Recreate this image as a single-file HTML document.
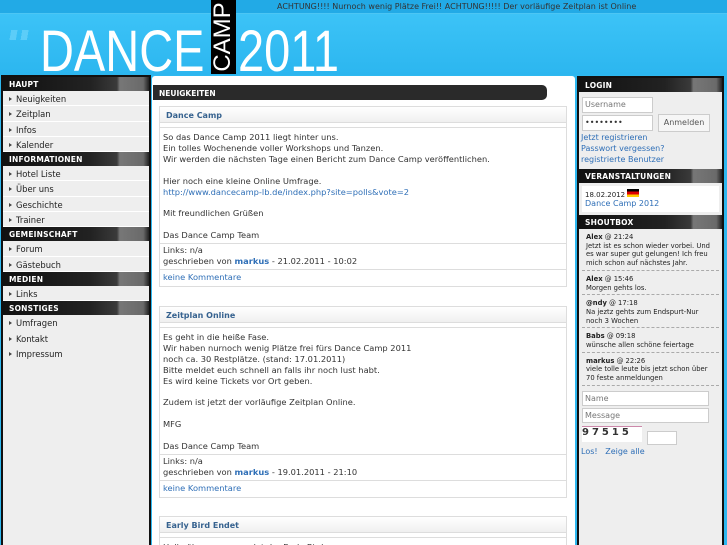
<!DOCTYPE html>
<html><head><meta charset="utf-8"><style>
*{margin:0;padding:0;box-sizing:border-box}
html,body{width:727px;height:545px;overflow:hidden}
body{background:#2eb8f0;font-family:"DejaVu Sans","Liberation Sans",sans-serif;position:relative}
.abs{position:absolute}
#top{left:0;top:0;width:727px;height:14px;background:#22aae6;border-bottom:1px solid #4cc6f4}
#marq{left:277px;top:2px;font-size:8px;color:#333;white-space:nowrap}
#hdr{left:0;top:14px;width:727px;height:61px;background:linear-gradient(#3cc3f7,#2cb6ef)}
.big{font-family:"Liberation Sans",sans-serif;color:#fff;font-size:58px;line-height:58px;transform:scaleX(.81);transform-origin:0 0;white-space:nowrap}
#camp{left:211px;top:0;width:25px;height:74px;background:#000}
#campt{left:210px;top:72px;color:#fff;font-family:"Liberation Sans",sans-serif;font-size:24px;transform:rotate(-90deg);transform-origin:0 0;width:70px;text-align:center;line-height:26px}
.col{background:#eeeeee;border:2px solid #111}
.bar{height:14px;background:linear-gradient(90deg,#111,#222 60%,#3a3a3a 78%,#777 80%,#6a6a6a 96%,#222);color:#fff;font-size:7.5px;font-weight:bold;padding:3px 0 0 6px;letter-spacing:.2px}
.it{height:15.3px;font-size:8.4px;color:#222;padding:3px 0 0 6px;border-bottom:1px solid #fff}
.it:before{content:"";display:inline-block;border-left:3px solid #444;border-top:2px solid transparent;border-bottom:2px solid transparent;margin-right:4px;vertical-align:1px}
#main{left:152px;top:76px;width:423px;height:480px;background:#fff;border-radius:3px 3px 0 0}
#nbar{left:153px;top:85px;width:394px;height:15px;background:#2a2a2a;border-radius:0 5px 5px 0;color:#fff;font-size:7.5px;font-weight:bold;padding:4px 0 0 6px}
.box{position:absolute;left:159px;width:408px;border:1px solid #ddd;background:#fff}
.bt{height:16px;background:linear-gradient(#fff,#f0f0f0);font-size:8px;font-weight:bold;color:#36628f;padding:4px 0 0 6px;border-bottom:1px solid #ddd;margin-bottom:4px}
.bb{border-top:1px solid #ddd;font-size:8.3px;line-height:10.9px;color:#333;padding:4px 3px 2px}
.bb a,.lk{color:#2f6fb7;text-decoration:none}
.rt{left:577px;top:76px;width:147px;height:480px}
.inp{position:absolute;border:1px solid #ccc;background:#fff;font-size:8px;color:#777;padding:2px 2px}
.sh{font-size:6.8px;line-height:8.7px;color:#222;padding:4px 4px 2px;border-bottom:1px dashed #aaa;margin:0 3px}
</style></head><body>
<div id="top" class="abs"></div>
<div id="marq" class="abs">ACHTUNG!!!! Nurnoch wenig Plätze Frei!! ACHTUNG!!!!! Der vorläufige Zeitplan ist Online</div>
<div id="hdr" class="abs"></div>
<div class="abs" style="left:8px;top:30px;width:30px;height:10px;background:linear-gradient(100deg,transparent 10%,#5ccdf8 10% 30%,transparent 30% 45%,#5ccdf8 45% 65%,transparent 65%)"></div>
<div class="abs big" style="left:40px;top:23px">DANCE</div>
<div class="abs big" style="left:238px;top:23px">2011</div>
<div id="camp" class="abs"></div>
<div id="campt" class="abs">CAMP</div>

<div class="abs col" style="left:1px;top:75px;width:150px;height:475px">
<div class="bar">HAUPT</div>
<div class="it">Neuigkeiten</div><div class="it">Zeitplan</div><div class="it">Infos</div><div class="it">Kalender</div>
<div class="bar">INFORMATIONEN</div>
<div class="it">Hotel Liste</div><div class="it">Über uns</div><div class="it">Geschichte</div><div class="it">Trainer</div>
<div class="bar">GEMEINSCHAFT</div>
<div class="it">Forum</div><div class="it">Gästebuch</div>
<div class="bar">MEDIEN</div>
<div class="it">Links</div>
<div class="bar">SONSTIGES</div>
<div class="it" style="border:0">Umfragen</div><div class="it" style="border:0">Kontakt</div><div class="it" style="border:0">Impressum</div>
</div>

<div id="main" class="abs"></div>
<div id="nbar" class="abs">NEUIGKEITEN</div>

<div class="box" style="top:106px">
<div class="bt">Dance Camp</div>
<div class="bb">So das Dance Camp 2011 liegt hinter uns.<br>Ein tolles Wochenende voller Workshops und Tanzen.<br>Wir werden die nächsten Tage einen Bericht zum Dance Camp veröffentlichen.<br><br>Hier noch eine kleine Online Umfrage.<br><a>http://www.dancecamp-lb.de/index.php?site=polls&amp;vote=2</a><br><br>Mit freundlichen Grüßen<br><br>Das Dance Camp Team</div>
<div class="bb" style="padding-top:1px">Links: n/a<br>geschrieben von <b class="lk">markus</b> - 21.02.2011 - 10:02</div>
<div class="bb" style="padding:2px 3px 3px"><a>keine Kommentare</a></div>
</div>

<div class="box" style="top:306px">
<div class="bt">Zeitplan Online</div>
<div class="bb">Es geht in die heiße Fase.<br>Wir haben nurnoch wenig Plätze frei fürs Dance Camp 2011<br>noch ca. 30 Restplätze. (stand: 17.01.2011)<br>Bitte meldet euch schnell an falls ihr noch lust habt.<br>Es wird keine Tickets vor Ort geben.<br><br>Zudem ist jetzt der vorläufige Zeitplan Online.<br><br>MFG<br><br>Das Dance Camp Team</div>
<div class="bb" style="padding-top:1px">Links: n/a<br>geschrieben von <b class="lk">markus</b> - 19.01.2011 - 21:10</div>
<div class="bb" style="padding:2px 3px 3px"><a>keine Kommentare</a></div>
</div>

<div class="box" style="top:516px;height:40px">
<div class="bt">Early Bird Endet</div>
<div class="bb">Hallo übermorgen endet der Early Bird</div>
</div>

<div class="abs col rt">
<div class="bar">LOGIN</div>
<div style="position:relative;height:77px">
<div class="inp" style="left:3px;top:5px;width:71px;height:16px">Username</div>
<div class="inp" style="left:3px;top:23px;width:71px;height:16px;color:#333">••••••••</div>
<div class="inp" style="left:79px;top:22px;width:52px;height:18px;background:#f6f6f6;color:#555;padding-top:3px;text-align:center">Anmelden</div>
<div class="abs lk" style="left:2px;top:40px;font-size:8px;line-height:11px">Jetzt registrieren<br>Passwort vergessen?<br>registrierte Benutzer</div>
</div>
<div class="bar">VERANSTALTUNGEN</div>
<div style="background:#fff;margin:3px 3px;height:26px;font-size:7px;padding:3px 3px;color:#222">18.02.2012 <span style="display:inline-block;width:12px;height:8px;background:linear-gradient(#000 33%,#d00 33% 66%,#fc0 66%);vertical-align:0"></span><br><span class="lk" style="font-size:8px">Dance Camp 2012</span></div>
<div class="bar">SHOUTBOX</div>
<div class="sh"><b>Alex</b> @ 21:24<br>Jetzt ist es schon wieder vorbei. Und es war super gut gelungen! Ich freu mich schon auf nächstes Jahr.</div>
<div class="sh"><b>Alex</b> @ 15:46<br>Morgen gehts los.</div>
<div class="sh"><b>@ndy</b> @ 17:18<br>Na jeztz gehts zum Endspurt-Nur noch 3 Wochen</div>
<div class="sh"><b>Babs</b> @ 09:18<br>wünsche allen schöne feiertage</div>
<div class="sh"><b>markus</b> @ 22:26<br>viele tolle leute bis jetzt schon über 70 feste anmeldungen</div>
<div style="position:relative;height:80px">
<div class="inp" style="left:3px;top:5px;width:127px;height:15px">Name</div>
<div class="inp" style="left:3px;top:22px;width:127px;height:15px">Message</div>
<div class="abs" style="left:3px;top:40px;width:60px;height:16px;background:#fff;font-size:10px;font-weight:bold;color:#333;letter-spacing:3px;border-top:1px solid #c8a;">97515</div>
<div class="inp" style="left:68px;top:45px;width:30px;height:14px"></div>
<div class="abs lk" style="left:2px;top:61px;font-size:8px">Los! &nbsp; Zeige alle</div>
</div>
</div>
</body></html>
